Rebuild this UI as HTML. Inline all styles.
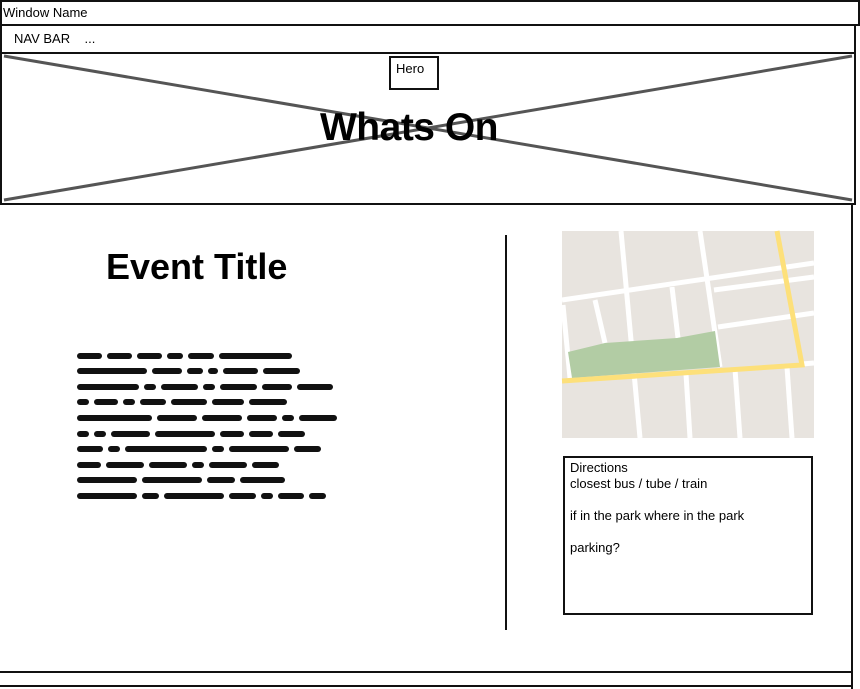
<html><head><style>
body{margin:0;width:860px;height:689px;background:#fff;position:relative;overflow:hidden;font-family:"Liberation Sans",sans-serif;color:#000}
.a{position:absolute}
.ln{position:absolute;left:77px;height:6px;display:flex;gap:5px}
.ln i{display:block;height:6px;background:#111;border-radius:3px}
</style></head><body>
<div class="a" style="left:0;top:0;width:856px;height:22px;border:2px solid #111;border-bottom:2px solid #111"></div>
<div class="a" style="left:3px;top:5px;font-size:13px">Window Name</div>
<div class="a" style="left:0;top:24px;width:852px;height:26px;border:2px solid #111"></div>
<div class="a" style="left:14px;top:31px;font-size:13px">NAV BAR &nbsp;&nbsp;&nbsp;...</div>
<div class="a" style="left:0;top:52px;width:852px;height:149px;border:2px solid #111"></div>
<svg class="a" style="left:0;top:0" width="860" height="689">
<line x1="4" y1="56" x2="852" y2="200" stroke="#555" stroke-width="3"/>
<line x1="4" y1="200" x2="852" y2="56" stroke="#555" stroke-width="3"/>
<line x1="852" y1="203" x2="852" y2="689" stroke="#111" stroke-width="2"/>
<line x1="0" y1="672" x2="852" y2="672" stroke="#111" stroke-width="2"/>
<line x1="0" y1="686" x2="852" y2="686" stroke="#111" stroke-width="2"/>
<line x1="506" y1="235" x2="506" y2="630" stroke="#111" stroke-width="2"/>
<g>
<rect x="562" y="231" width="252" height="207" fill="#e8e4df"/>
<g stroke="#fff" stroke-width="5" fill="none">
<line x1="562" y1="300" x2="814" y2="263"/>
<line x1="621" y1="231" x2="640" y2="438"/>
<line x1="700" y1="231" x2="720" y2="367"/>
<line x1="714" y1="290" x2="814" y2="277"/>
<line x1="718" y1="327" x2="814" y2="313"/>
<line x1="595" y1="300" x2="605" y2="343"/>
<line x1="672" y1="287" x2="678" y2="338"/>
<line x1="563" y1="305" x2="570" y2="378"/>
<line x1="686" y1="374" x2="690" y2="438"/>
<line x1="735" y1="369" x2="740" y2="438"/>
<line x1="787" y1="367" x2="792" y2="438"/>
<line x1="802" y1="364" x2="814" y2="363"/>
</g>
<polygon points="568,352 605,343 677,338 715,331 720,367 572,378" fill="#b2cca4"/>
<g stroke="#fde07a" stroke-width="5" fill="none">
<polyline points="777,231 802,365 562,381"/>
</g>
</g>
</svg>
<div class="a" style="left:389px;top:56px;width:46px;height:30px;border:2px solid #111"></div>
<div class="a" style="left:396px;top:61px;font-size:13px">Hero</div>
<div class="a" style="left:320px;top:106px;font-size:39px;font-weight:bold;letter-spacing:-0.5px">Whats On</div>
<div class="a" style="left:106px;top:246px;font-size:36px;font-weight:bold">Event Title</div>
<div class="ln" style="top:353px"><i style="width:25px"></i><i style="width:25px"></i><i style="width:25px"></i><i style="width:16px"></i><i style="width:26px"></i><i style="width:73px"></i></div>
<div class="ln" style="top:368px"><i style="width:70px"></i><i style="width:30px"></i><i style="width:16px"></i><i style="width:10px"></i><i style="width:35px"></i><i style="width:37px"></i></div>
<div class="ln" style="top:384px"><i style="width:62px"></i><i style="width:12px"></i><i style="width:37px"></i><i style="width:12px"></i><i style="width:37px"></i><i style="width:30px"></i><i style="width:36px"></i></div>
<div class="ln" style="top:399px"><i style="width:12px"></i><i style="width:24px"></i><i style="width:12px"></i><i style="width:26px"></i><i style="width:36px"></i><i style="width:32px"></i><i style="width:38px"></i></div>
<div class="ln" style="top:415px"><i style="width:75px"></i><i style="width:40px"></i><i style="width:40px"></i><i style="width:30px"></i><i style="width:12px"></i><i style="width:38px"></i></div>
<div class="ln" style="top:431px"><i style="width:12px"></i><i style="width:12px"></i><i style="width:39px"></i><i style="width:60px"></i><i style="width:24px"></i><i style="width:24px"></i><i style="width:27px"></i></div>
<div class="ln" style="top:446px"><i style="width:26px"></i><i style="width:12px"></i><i style="width:82px"></i><i style="width:12px"></i><i style="width:60px"></i><i style="width:27px"></i></div>
<div class="ln" style="top:462px"><i style="width:24px"></i><i style="width:38px"></i><i style="width:38px"></i><i style="width:12px"></i><i style="width:38px"></i><i style="width:27px"></i></div>
<div class="ln" style="top:477px"><i style="width:60px"></i><i style="width:60px"></i><i style="width:28px"></i><i style="width:45px"></i></div>
<div class="ln" style="top:493px"><i style="width:60px"></i><i style="width:17px"></i><i style="width:60px"></i><i style="width:27px"></i><i style="width:12px"></i><i style="width:26px"></i><i style="width:17px"></i></div>
<div class="a" style="left:563px;top:456px;width:246px;height:155px;border:2px solid #111"></div>
<div class="a" style="left:570px;top:460px;font-size:13px;line-height:16px">Directions<br>closest bus / tube / train<br><br>if in the park where in the park<br><br>parking?</div>
</body></html>
